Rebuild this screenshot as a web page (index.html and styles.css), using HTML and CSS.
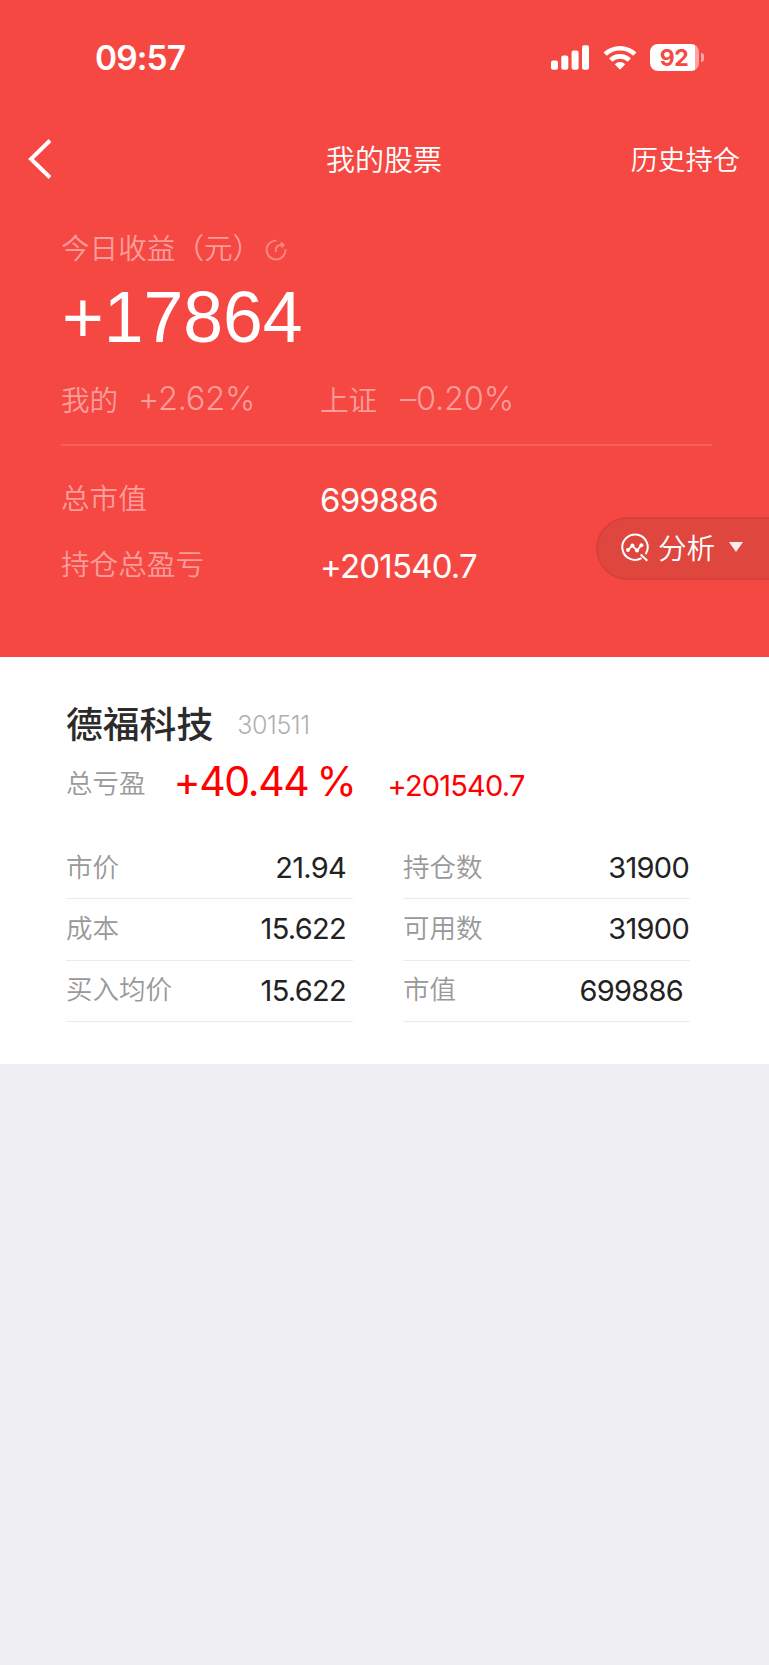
FILE: index.html
```html
<!DOCTYPE html>
<html lang="zh-CN">
<head>
    <meta charset="UTF-8">
    <meta name="viewport" content="width=device-width, initial-scale=1.0">
    <title>我的股票</title>
    <link rel="stylesheet" href="styles.css">
</head>
<body>
    <div class="hero">
        <div class="status-bar">
            <span class="time">09:57</span>
            <div class="status-icons">
                <svg class="signal" width="38" height="25" viewBox="0 0 38 25" fill="#fff">
                    <rect x="0" y="15.5" width="7" height="9.2" rx="2"/>
                    <rect x="10.3" y="10.6" width="7" height="14.1" rx="2"/>
                    <rect x="20.6" y="5.5" width="7" height="19.2" rx="2"/>
                    <rect x="31" y="0.3" width="7" height="24.4" rx="2"/>
                </svg>
                <svg class="wifi" width="34" height="25" viewBox="0 0 34 25" fill="none" stroke="#fff" stroke-width="4.6">
                    <path d="M2.2 9.2A21.3 21.3 0 0 1 31.8 9.2"/>
                    <path d="M7.7 15.1A13.4 13.4 0 0 1 26.3 15.1"/>
                    <path d="M11.7 19.2a7.7 7.7 0 0 1 10.6 0L17.7 24a1 1 0 0 1-1.4 0z" fill="#fff" stroke="none"/>
                </svg>
                <div class="battery">
                    <span class="battery-level">92</span>
                </div>
                <span class="battery-cap"></span>
            </div>
        </div>

        <div class="navbar">
            <svg class="back" width="26" height="42" viewBox="0 0 26 42" fill="none" stroke="#fff" stroke-width="4">
                <path d="M23 2.5L4 21L23 39.5"/>
            </svg>
            <h1>我的股票</h1>
            <a class="history">历史持仓</a>
        </div>

        <div class="profit">
            <div class="profit-title">
                <span>今日收益（元）</span>
                <svg width="24" height="24" viewBox="0 0 24 24" fill="none" stroke="#fff" stroke-width="1.9">
                    <path d="M12.5 2.6A9.4 9.4 0 1 0 21.4 11.3"/>
                    <path d="M11.8 14V11.2Q12.2 7.2 17 7H19.5M16.8 4.4L19.6 7L17.3 9.4"/>
                </svg>
            </div>
            <div class="profit-num">+17864</div>
            <div class="compare">
                <span class="label">我的</span><span class="rate">+2.62%</span>
                <span class="label">上证</span><span class="rate index">–0.20%</span>
            </div>
        </div>

        <div class="totals">
            <div class="total-row">
                <span class="label">总市值</span>
                <span class="value">699886</span>
            </div>
            <div class="total-row">
                <span class="label">持仓总盈亏</span>
                <span class="value">+201540.7</span>
            </div>
        </div>

        <!-- floating analysis button -->
        <div class="analysis">
            <svg width="30" height="30" viewBox="0 0 30 30" fill="none" stroke="#fff" stroke-width="2">
                <path d="M21.5 25.1A12.7 12.7 0 1 1 25.6 21.2M20.7 21.5L27.3 27.8"/>
                <path d="M8.3 16.8L12.3 12.6L17 17.6L21.2 12.4" stroke-width="1.8"/>
                <g fill="#fff" stroke="none">
                    <circle cx="8" cy="17" r="2"/>
                    <circle cx="12.4" cy="12.5" r="2"/>
                    <circle cx="17" cy="17.6" r="2"/>
                    <circle cx="21.4" cy="12.2" r="2"/>
                </g>
            </svg>
            <span>分析</span>
            <i class="arrow"></i>
        </div>
    </div>

    <div class="stock">
        <div class="stock-name">
            <h2>德福科技</h2>
            <span class="code">301511</span>
        </div>
        <div class="stock-profit">
            <span class="label">总亏盈</span>
            <span class="percent">+40.44 %</span>
            <span class="amount">+201540.7</span>
        </div>
        <div class="stock-grid">
            <div class="cell"><span class="label">市价</span><span class="num">21.94</span></div>
            <div class="cell right"><span class="label">持仓数</span><span class="num">31900</span></div>
            <div class="cell"><span class="label">成本</span><span class="num">15.622</span></div>
            <div class="cell right"><span class="label">可用数</span><span class="num">31900</span></div>
            <div class="cell"><span class="label">买入均价</span><span class="num">15.622</span></div>
            <div class="cell right"><span class="label">市值</span><span class="num short">699886</span></div>
        </div>
    </div>
</body>
</html>
```
FILE: styles.css
```css
* {
    margin: 0;
    padding: 0;
    box-sizing: border-box;
}

body {
    font-family: Inter, "Noto Sans CJK SC", sans-serif;
    background: #eeeef3;
    min-height: 1665px;
    overflow-x: hidden;
}

.label,
.profit-title,
.history,
.analysis,
h1,
h2 {
    font-family: "Noto Sans CJK SC", sans-serif;
    font-weight: 350;
    white-space: nowrap;
}

.hero {
    position: relative;
    height: 657px;
    background: #f64843;
    color: #fff;
}

/* Status bar */
.status-bar {
    height: 114px;
    padding: 0 65px 0 95px;
    display: flex;
    justify-content: space-between;
    align-items: center;
}

.time {
    padding-top: 2px;
    font-size: 33.5px;
    font-weight: 600;
    letter-spacing: -0.9px;
}

.status-icons {
    display: flex;
    align-items: center;
}

.wifi {
    margin-left: 14px;
}

.battery {
    width: 49px;
    height: 27px;
    margin-left: 13px;
    border-radius: 8px;
    background: linear-gradient(to right, #fff 45px, #fba5a2 45px);
}

.battery-level {
    display: block;
    width: 48px;
    line-height: 28px;
    text-align: center;
    font-size: 23px;
    font-weight: 700;
    letter-spacing: -0.5px;
    color: #f64843;
}

.battery-cap {
    width: 3px;
    height: 9px;
    margin-left: 2px;
    border-radius: 0 4px 4px 0;
    background: #fba5a2;
}

/* Title bar */
.navbar {
    height: 90px;
    padding: 0 29px 0 27px;
    display: grid;
    grid-template-columns: 1fr auto 1fr;
    align-items: center;
}

.navbar h1 {
    font-size: 29px;
    line-height: 40px;
    padding: 0 0 2px 1px;
}

.history {
    font-size: 27.3px;
    line-height: 40px;
    padding-bottom: 2px;
    text-align: right;
}

/* Today's profit */
.profit {
    margin: 0 57px 0 61px;
    height: 242px;
    padding-top: 24px;
    border-bottom: 2px solid rgba(255, 255, 255, 0.14);
}

.profit-title {
    height: 40px;
    display: flex;
    align-items: center;
    font-size: 28.6px;
    line-height: 40px;
    color: rgba(255, 255, 255, 0.48);
}

.profit-title span {
    padding-bottom: 2px;
}

.profit-title svg {
    margin: 3px 0 0 3px;
    opacity: 0.35;
}

.profit-num {
    font-family: "Liberation Sans", Arial, sans-serif;
    font-size: 71.5px;
    line-height: 80px;
    margin: 9px 0 0 1px;
}

.compare {
    height: 44px;
    margin-top: 20px;
    display: flex;
    align-items: center;
    color: rgba(255, 255, 255, 0.48);
}

.compare .label {
    width: 77px;
    font-size: 28.6px;
    padding-bottom: 2px;
}

.compare .rate {
    width: 182px;
    padding-bottom: 1px;
    font-size: 32.5px;
    font-weight: 300;
    letter-spacing: -0.2px;
}

.compare .index {
    padding-left: 3px;
}

/* Totals */
.totals {
    padding: 21px 61px;
}

.total-row {
    height: 66px;
    display: flex;
    align-items: center;
}

.total-row .label {
    width: 259px;
    font-size: 28.6px;
    padding-bottom: 8px;
    color: rgba(255, 255, 255, 0.48);
}

.total-row .value {
    font-size: 33px;
    letter-spacing: -0.8px;
}

.analysis {
    position: absolute;
    right: 0;
    top: 517px;
    width: 173px;
    height: 63px;
    padding-left: 22px;
    display: flex;
    align-items: center;
    background: #de463e;
    border: 2px solid #d8403b;
    border-right: none;
    border-radius: 32px 0 0 32px;
    font-size: 28.6px;
    line-height: 40px;
}

.analysis svg {
    margin-bottom: 2px;
}

.analysis span {
    margin-left: 8px;
    padding-bottom: 4px;
}

.arrow {
    margin: 0 0 3px 14px;
    border-left: 7px solid transparent;
    border-right: 7px solid transparent;
    border-top: 10px solid #fdeceb;
}

/* Stock card */
.stock {
    height: 407px;
    padding: 38px 79px 0 66px;
    background: #fff;
}

.stock-name {
    height: 60px;
    display: flex;
    align-items: center;
}

.stock-name h2 {
    font-size: 36.8px;
    font-weight: 500;
    line-height: 50px;
    padding-bottom: 6px;
    color: #2b2b2b;
}

.code {
    margin-left: 24px;
    font-size: 25px;
    font-weight: 300;
    letter-spacing: -0.4px;
    color: #b0b0b0;
}

.stock-profit {
    height: 56px;
    display: flex;
    align-items: center;
    color: #f00;
}

.stock .label {
    font-size: 26.5px;
    line-height: 40px;
    padding-bottom: 5px;
    color: #999;
}

.stock .stock-profit .label {
    padding-bottom: 3px;
}

.percent {
    width: 213px;
    padding: 0 0 4px 28px;
    font-size: 41px;
    letter-spacing: -1.4px;
    word-spacing: -2px;
    white-space: nowrap;
}

.amount {
    margin-left: 29px;
    padding-top: 4px;
    font-size: 29px;
    letter-spacing: -0.8px;
}

.stock-grid {
    margin-top: 27px;
    display: grid;
    grid-template-columns: 287px 287px;
    column-gap: 50px;
}

.cell {
    height: 61.3px;
    padding-right: 7px;
    display: flex;
    justify-content: space-between;
    align-items: center;
    border-bottom: 1px solid #ebebeb;
}

.cell.right {
    padding-right: 1px;
}

.num {
    font-size: 29px;
    letter-spacing: -0.7px;
    padding-bottom: 1px;
    color: #222;
}

.num.short {
    margin-right: 6px;
}
```
